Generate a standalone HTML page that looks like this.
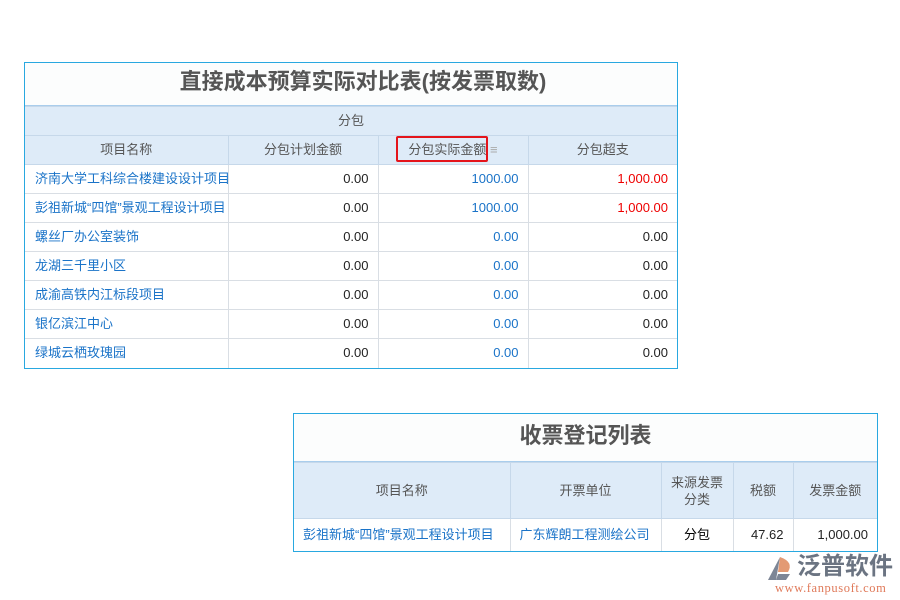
<!DOCTYPE html>
<html><head><meta charset="utf-8"><style>
body{margin:0;width:900px;height:600px;background:#fff;position:relative;font-family:"Liberation Sans","Noto Sans CJK SC",sans-serif;overflow:hidden}
.a{position:absolute;box-sizing:border-box}
table{border-collapse:collapse;table-layout:fixed;position:absolute;font-size:13px}
td{border:1px solid #d9dee4;padding:0 9px;white-space:nowrap;overflow:hidden;line-height:16px}
.h td{background:#deebf8;color:#555;text-align:center;border-color:#c6d8ea}
.l{color:#1a73c8;text-align:left}
.n{text-align:right;color:#222}
.b{color:#1a73c8}
.r{color:#e00}
.t{font-weight:bold;color:#555;text-align:center;background:#fcfdfd}
.f{border:1px solid #29a8e0;z-index:5}
</style></head><body>
<div class="a t" style="left:25px;top:63px;width:652px;height:43px;font-size:22px;line-height:38px;padding-left:24px;border-bottom:1px solid #a9cdec">直接成本预算实际对比表(按发票取数)</div>
<table style="left:25px;top:106px;width:652px">
<colgroup><col style="width:203px"><col style="width:150px"><col style="width:150px"><col style="width:149px"></colgroup>
<tr class="h" style="height:29px"><td colspan="4" style="border-left:0;border-right:0">分包</td></tr>
<tr class="h" style="height:29px"><td style="border-left:0">项目名称</td><td>分包计划金额</td><td>分包实际金额 <span style="color:#aaa">&#8801;</span></td><td style="border-right:0">分包超支</td></tr>
<tr style="height:29px"><td class="l" style="padding-left:10px;border-left:0">济南大学工科综合楼建设设计项目</td><td class="n">0.00</td><td class="n b">1000.00</td><td class="n r" style="border-right:0">1,000.00</td></tr>
<tr style="height:29px"><td class="l" style="padding-left:10px;border-left:0">彭祖新城“四馆”景观工程设计项目</td><td class="n">0.00</td><td class="n b">1000.00</td><td class="n r" style="border-right:0">1,000.00</td></tr>
<tr style="height:29px"><td class="l" style="padding-left:10px;border-left:0">螺丝厂办公室装饰</td><td class="n">0.00</td><td class="n b">0.00</td><td class="n" style="border-right:0">0.00</td></tr>
<tr style="height:29px"><td class="l" style="padding-left:10px;border-left:0">龙湖三千里小区</td><td class="n">0.00</td><td class="n b">0.00</td><td class="n" style="border-right:0">0.00</td></tr>
<tr style="height:29px"><td class="l" style="padding-left:10px;border-left:0">成渝高铁内江标段项目</td><td class="n">0.00</td><td class="n b">0.00</td><td class="n" style="border-right:0">0.00</td></tr>
<tr style="height:29px"><td class="l" style="padding-left:10px;border-left:0">银亿滨江中心</td><td class="n">0.00</td><td class="n b">0.00</td><td class="n" style="border-right:0">0.00</td></tr>
<tr style="height:29px"><td class="l" style="padding-left:10px;border-left:0;border-bottom:0">绿城云栖玫瑰园</td><td class="n" style="border-bottom:0">0.00</td><td class="n b" style="border-bottom:0">0.00</td><td class="n" style="border-right:0;border-bottom:0">0.00</td></tr>
</table>
<div class="a f" style="left:24px;top:62px;width:654px;height:307px"></div>
<div class="a" style="left:396px;top:136px;width:92px;height:26px;border:2px solid #e4141b;border-radius:2px;z-index:6"></div>

<div class="a t" style="left:294px;top:414px;width:583px;height:48px;font-size:22px;line-height:44px;border-bottom:1px solid #a9cdec">收票登记列表</div>
<table style="left:294px;top:462px;width:583px">
<colgroup><col style="width:216px"><col style="width:151px"><col style="width:72px"><col style="width:60px"><col style="width:84px"></colgroup>
<tr class="h" style="height:56px"><td style="border-left:0">项目名称</td><td>开票单位</td><td style="white-space:normal;padding:0 4px;line-height:17px">来源发票分类</td><td>税额</td><td style="border-right:0">发票金额</td></tr>
<tr style="height:33px"><td class="l" style="border-left:0;border-bottom:0">彭祖新城“四馆”景观工程设计项目</td><td class="l" style="border-bottom:0">广东辉朗工程测绘公司</td><td style="text-align:center;border-bottom:0">分包</td><td class="n" style="border-bottom:0">47.62</td><td class="n" style="border-right:0;border-bottom:0">1,000.00</td></tr>
</table>
<div class="a f" style="left:293px;top:413px;width:585px;height:139px"></div>

<svg class="a" style="left:766px;top:556px" width="30" height="26" viewBox="0 0 30 26"><path d="M14 1 L2 24 L10 24 Z" fill="#7d8696"/><path d="M14 1 Q28 6 22 16 L12 16 Z" fill="#e39a74"/><path d="M12 18 L24 18 L20 24 L10 24Z" fill="#7d8696"/></svg>
<div class="a" style="left:797px;top:553px;font-size:24px;color:#6b7482;font-weight:bold;letter-spacing:0px;line-height:28px">泛普软件</div>
<div class="a" style="left:775px;top:581px;font-size:12.5px;color:#e07a5a;font-family:'Liberation Serif',serif;letter-spacing:0.6px;line-height:14px">www.fanpusoft.com</div>
</body></html>
